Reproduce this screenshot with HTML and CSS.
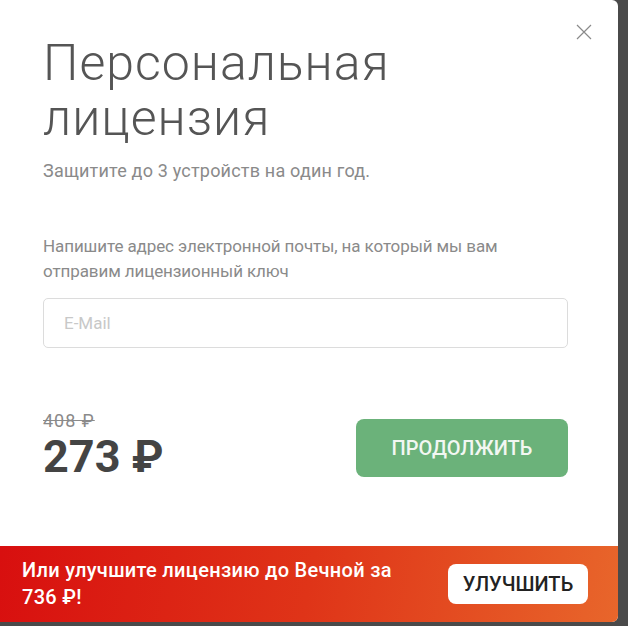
FILE: index.html
```html
<!DOCTYPE html>
<html lang="ru">
<head>
<meta charset="utf-8">
<title>Персональная лицензия</title>
<link rel="stylesheet" href="styles.css">
</head>
<body>
<div class="modal">
  <button class="close" aria-label="Закрыть">
    <svg width="16" height="16" viewBox="0 0 16 16"><path d="M1 1L15 15M15 1L1 15" stroke="#8a8a8a" stroke-width="1.2" fill="none"/></svg>
  </button>
  <div class="content">
    <h1 class="title">Персональная лицензия</h1>
    <p class="subtitle">Защитите до 3 устройств на один год.</p>
    <p class="note">Напишите адрес электронной почты, на который мы вам отправим лицензионный ключ</p>
    <input class="email" type="text" placeholder="E-Mail">
    <div class="buy">
      <div class="price">
        <div class="old">408 ₽</div>
        <div class="new">273 ₽</div>
      </div>
      <button class="continue">ПРОДОЛЖИТЬ</button>
    </div>
  </div>
  <div class="upgrade">
    <p class="upgrade-text">Или улучшите лицензию до Вечной за 736 ₽!</p>
    <button class="upgrade-btn">УЛУЧШИТЬ</button>
  </div>
</div>
</body>
</html>
```

FILE: styles.css
```css
html, body {
  margin: 0;
  padding: 0;
}
body {
  background: #4a4a4a;
  width: 628px;
  height: 626px;
  overflow: hidden;
  font-family: Roboto, "Liberation Sans", sans-serif;
}
.modal {
  position: relative;
  width: 618px;
  height: 622px;
  background: #fff;
  border-radius: 0 6px 6px 0;
  overflow: hidden;
  display: flex;
  flex-direction: column;
}
.close {
  position: absolute;
  left: 576px;
  top: 24px;
  width: 16px;
  height: 16px;
  padding: 0;
  border: 0;
  background: none;
}
.close svg { display: block; }
.content {
  flex: 1;
  padding: 36px 50px 0 43px;
}
.title {
  margin: 0;
  font-family: Roboto, sans-serif;
  font-weight: 300;
  font-size: 50px;
  letter-spacing: 1px;
  line-height: 55px;
  color: #555;
  width: 420px;
}
.subtitle {
  margin: 13px 0 0;
  font-size: 18px;
  letter-spacing: 0.2px;
  line-height: 24px;
  color: #8a8a8a;
}
.note {
  margin: 51px 0 0;
  font-size: 17px;
  letter-spacing: -0.1px;
  line-height: 25px;
  color: #8a8a8a;
  width: 480px;
}
.email {
  display: block;
  box-sizing: border-box;
  margin-top: 14px;
  width: 525px;
  height: 50px;
  border: 1px solid #dcdcdc;
  border-radius: 5px;
  padding: 0 20px;
  font-family: Roboto, sans-serif;
  font-size: 17px;
  color: #555;
  outline: none;
}
.email::placeholder { color: #c8c8c8; }
.buy {
  margin-top: 61px;
  width: 525px;
  display: flex;
  justify-content: space-between;
  align-items: flex-start;
}
.price {
  padding-top: 1px;
}
.old {
  font-size: 18px;
  letter-spacing: 1px;
  line-height: 22px;
  color: #8a8a8a;
  text-decoration: line-through;
}
.new {
  font-size: 45px;
  font-weight: 700;
  line-height: 50px;
  color: #444;
}
.continue {
  margin-top: 10px;
  width: 212px;
  height: 58px;
  border: 0;
  border-radius: 8px;
  background: #6bb27a;
  color: #f2f7f2;
  font-family: Roboto, sans-serif;
  font-size: 20px;
  font-weight: 500;
}
.upgrade {
  height: 76px;
  box-sizing: border-box;
  background: linear-gradient(100deg, #d80f0f 0%, #df3418 50%, #e8662b 100%);
  display: flex;
  align-items: center;
  justify-content: space-between;
  padding: 0 30px 0 22px;
}
.upgrade-text {
  margin: 0;
  width: 390px;
  font-size: 20px;
  font-weight: 500;
  letter-spacing: 0.3px;
  line-height: 27px;
  color: #fff;
}
.upgrade-btn {
  width: 140px;
  height: 40px;
  border: 0;
  border-radius: 8px;
  background: #fff;
  color: #222;
  font-family: Roboto, sans-serif;
  font-size: 20px;
  font-weight: 500;
}
```
